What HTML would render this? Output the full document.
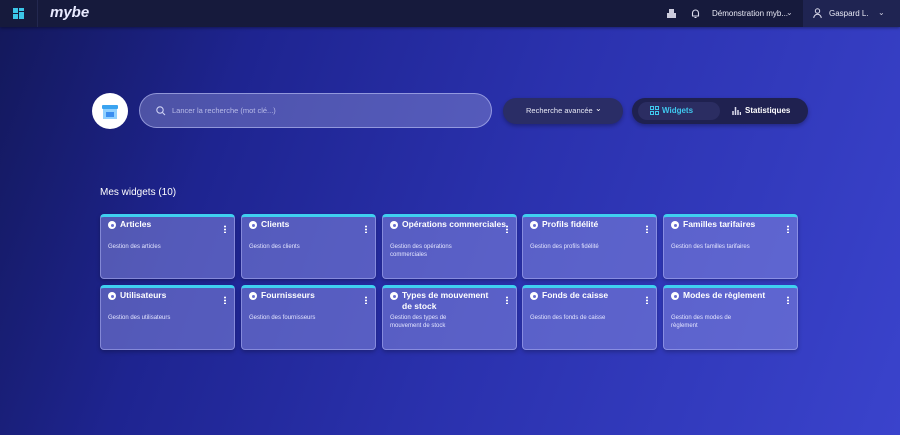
<!DOCTYPE html>
<html><head><meta charset="utf-8"><style>
*{box-sizing:border-box;margin:0;padding:0}
body{width:900px;height:435px;overflow:hidden;font-family:"Liberation Sans",sans-serif;color:#fff;background:linear-gradient(110deg,#13185a 0%,#1e2490 25%,#2a31ad 55%,#3a43cc 100%);position:relative}
.hdr{position:absolute;left:0;top:0;width:900px;height:27px;background:#161a3c;box-shadow:0 1px 3px rgba(0,0,0,.4)}
.user{position:absolute;right:0;top:0;width:97px;height:27px;background:#1f2452}
.t{position:absolute;white-space:nowrap}
.search{position:absolute;left:139px;top:93px;width:353px;height:35px;border-radius:18px;background:rgba(140,145,210,.45);border:1px solid rgba(200,205,255,.55)}
.logo{position:absolute;left:92px;top:93px;width:36px;height:36px;border-radius:50%;background:#fff}
.adv{position:absolute;left:503px;top:98px;width:120px;height:26px;border-radius:13px;background:#2a2d66;box-shadow:0 2px 4px rgba(0,0,0,.3)}
.tog{position:absolute;left:632px;top:98px;width:176px;height:26px;border-radius:13px;background:#1f2150;box-shadow:0 2px 4px rgba(0,0,0,.3)}
.tog .on{position:absolute;left:6px;top:4px;width:82px;height:18px;border-radius:9px;background:#2b2d62}
.card{position:absolute;width:135px;height:65px;border-radius:4px;background:rgba(130,135,220,.55);border:1px solid rgba(190,195,255,.45);border-top:3px solid #3fd0f0;box-shadow:0 2px 4px rgba(0,0,0,.25)}
.card .ic{position:absolute;left:7px;top:4px;width:8px;height:8px;border-radius:50%;background:#fff}
.card .ic:after{content:"";position:absolute;left:2.5px;top:2.5px;width:3px;height:3px;border-radius:50%;background:#6a6fd0}
.card .ti{position:absolute;left:19px;top:2px;font-size:8.5px;font-weight:bold;line-height:11px;width:105px;white-space:nowrap}
.card .ds{position:absolute;left:7px;top:26px;font-size:6px;line-height:8px;color:#e4e6ff;width:80px}
.card .dots{position:absolute;right:8px;top:8px;width:2px;height:8px;background:radial-gradient(circle,#fff 0.9px,transparent 1.1px) 0 0/2px 3px}
</style></head><body>
<div class="hdr"></div>
<div class="user"></div>
<svg class="t" style="left:13px;top:8px" width="11" height="11"><rect x="0" y="0" width="5" height="5" fill="#3cc6e8"/><rect x="6" y="0" width="5" height="3" fill="#3cc6e8"/><rect x="0" y="6" width="5" height="5" fill="#3cc6e8"/><rect x="6" y="4" width="5" height="7" fill="#3cc6e8"/></svg>
<div class="t" style="left:37px;top:0;width:1px;height:27px;background:#232850"></div>
<div class="t" style="left:50px;top:4px;font-size:15px;font-weight:bold;font-style:italic;color:#e8eaff">mybe</div>
<svg class="t" style="left:667px;top:9px" width="9" height="10"><rect x="2" y="0" width="5" height="4" fill="#ccd"/><rect x="0" y="4" width="9" height="5" fill="#ccd"/></svg>
<svg class="t" style="left:691px;top:8px" width="9" height="11"><path d="M1.5 8 V5 a3 3 0 0 1 6 0 V8 H1 H8 M3.5 9.5 h2" stroke="#dde" fill="none" stroke-width="1.1"/></svg>
<div class="t" style="left:712px;top:9px;font-size:8px;color:#e8e9f5">Démonstration myb...</div>
<div class="t" style="left:786px;top:8px;font-size:8px;color:#ccd">⌄</div>
<svg class="t" style="left:813px;top:8px" width="9" height="10"><circle cx="4.5" cy="3" r="2.2" stroke="#dde" fill="none"/><path d="M0.8 10 a3.7 3.7 0 0 1 7.4 0" stroke="#dde" fill="none"/></svg>
<div class="t" style="left:829px;top:9px;font-size:8px;color:#e8e9f5">Gaspard L.</div>
<div class="t" style="left:878px;top:8px;font-size:8px;color:#ccd">⌄</div>

<div class="logo"><svg style="position:absolute;left:9px;top:9px" width="18" height="18"><rect x="1" y="3" width="16" height="4" rx="1" fill="#3aa3f0"/><rect x="2" y="7" width="14" height="10" fill="#8fd0ff"/><rect x="5" y="10" width="8" height="5" fill="#3a8ef0"/></svg></div>
<div class="search"><svg style="position:absolute;left:16px;top:12px" width="10" height="10"><circle cx="4" cy="4" r="3.2" stroke="#cfd2f5" fill="none" stroke-width="1.1"/><path d="M6.5 6.5 L9 9" stroke="#cfd2f5" stroke-width="1.1"/></svg><div class="t" style="left:32px;top:12px;font-size:7.5px;color:#b8bbe8">Lancer la recherche (mot clé...)</div></div>
<div class="adv"><div class="t" style="left:23px;top:8px;font-size:7.5px;color:#e8e9f5">Recherche avancée</div><div class="t" style="left:92px;top:6px;font-size:8px">⌄</div></div>
<div class="tog"><div class="on"></div>
<svg class="t" style="left:18px;top:8px" width="9" height="9"><g stroke="#40c8ef" fill="none" stroke-width="1"><rect x=".5" y=".5" width="3" height="3"/><rect x="5.5" y=".5" width="3" height="3"/><rect x=".5" y="5.5" width="3" height="3"/><rect x="5.5" y="5.5" width="3" height="3"/></g></svg>
<div class="t" style="left:30px;top:8px;font-size:8px;font-weight:bold;color:#40c8ef">Widgets</div>
<svg class="t" style="left:100px;top:8px" width="9" height="9"><path d="M1 9V5M3.5 9V1M6 9V4M8.5 9V6" stroke="#dde" stroke-width="1.5"/></svg>
<div class="t" style="left:113px;top:8px;font-size:8px;font-weight:bold;color:#fff">Statistiques</div></div>

<div class="t" style="left:100px;top:187px;font-size:10px;color:#fff">Mes widgets (10)</div>

<div class="card" style="left:100px;top:214px"><div class="ic"></div><div class="ti">Articles</div><div class="dots"></div><div class="ds">Gestion des articles</div></div>
<div class="card" style="left:241px;top:214px"><div class="ic"></div><div class="ti">Clients</div><div class="dots"></div><div class="ds">Gestion des clients</div></div>
<div class="card" style="left:382px;top:214px"><div class="ic"></div><div class="ti">Opérations commerciales</div><div class="dots"></div><div class="ds">Gestion des opérations commerciales</div></div>
<div class="card" style="left:522px;top:214px"><div class="ic"></div><div class="ti">Profils fidélité</div><div class="dots"></div><div class="ds">Gestion des profils fidélité</div></div>
<div class="card" style="left:663px;top:214px"><div class="ic"></div><div class="ti">Familles tarifaires</div><div class="dots"></div><div class="ds">Gestion des familles tarifaires</div></div>
<div class="card" style="left:100px;top:285px"><div class="ic"></div><div class="ti">Utilisateurs</div><div class="dots"></div><div class="ds">Gestion des utilisateurs</div></div>
<div class="card" style="left:241px;top:285px"><div class="ic"></div><div class="ti">Fournisseurs</div><div class="dots"></div><div class="ds">Gestion des fournisseurs</div></div>
<div class="card" style="left:382px;top:285px"><div class="ic"></div><div class="ti" style="white-space:normal;width:95px">Types de mouvement de stock</div><div class="dots"></div><div class="ds">Gestion des types de mouvement de stock</div></div>
<div class="card" style="left:522px;top:285px"><div class="ic"></div><div class="ti">Fonds de caisse</div><div class="dots"></div><div class="ds">Gestion des fonds de caisse</div></div>
<div class="card" style="left:663px;top:285px"><div class="ic"></div><div class="ti">Modes de règlement</div><div class="dots"></div><div class="ds">Gestion des modes de règlement</div></div>
</body></html>
